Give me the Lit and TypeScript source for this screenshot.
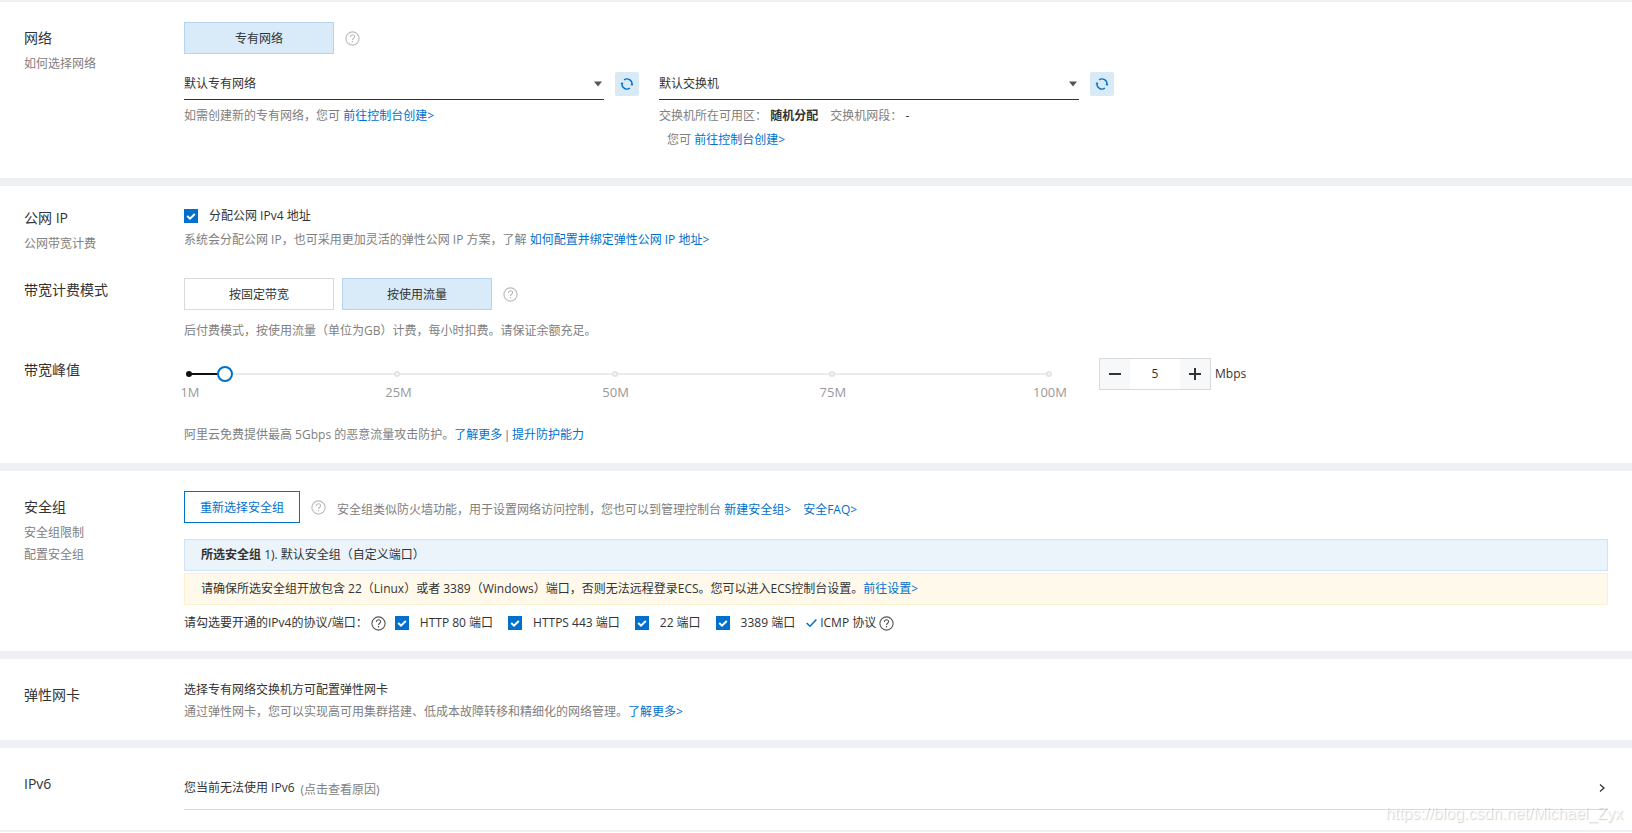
import { LitElement, html, css, svg } from "lit";
import { customElement, property, state } from "lit/decorators.js";
import { styleMap } from "lit/directives/style-map.js";

const shared = css`
  * {
    box-sizing: border-box;
  }
  a {
    color: #0070cc;
    text-decoration: none;
  }
`;

@customElement("help-icon")
class HelpIcon extends LitElement {
  static styles = css`
    :host {
      display: block;
      flex: none;
      width: 15px;
      height: 15px;
      color: #bbb;
    }
    .small {
      width: 14px;
    }
    svg {
      display: block;
    }
  `;
  render() {
    return html`<svg width="15" height="15" viewBox="0 0 15 15" fill="none" stroke="currentColor" role="img" aria-label="帮助">
      <circle cx="7.5" cy="7.5" r="6.600" stroke-width="1.100" />
      <path d="M5.400 6c0-1.300.9-2.200 2.100-2.200s2.100.9 2.100 2c0 1.400-2.100 1.600-2.100 3.200" stroke-width="1.100" />
      <path d="M7.500 10v1.400" stroke-width="1.200" />
    </svg>`;
  }
}

@customElement("check-option")
class CheckOption extends LitElement {
  @property() label = "";
  static styles = [
    shared,
    css`
      :host {
        display: block;
      }
      .option {
        display: flex;
        align-items: center;
        gap: 11px;
        line-height: 20px;
      }
      .box {
        display: grid;
        width: 14px;
        height: 14px;
      }
      input,
      svg {
        grid-area: 1 / 1;
        width: 14px;
        height: 14px;
        margin: 0;
      }
      input {
        appearance: none;
        border: 1px solid #0070cc;
        background: #fff;
      }
      input:checked {
        background: #0070cc;
      }
      svg {
        pointer-events: none;
      }
    `,
  ];
  render() {
    return html`<label class="option">
      <span class="box">
        <input type="checkbox" checked />
        <svg viewBox="0 0 14 14" fill="none" stroke="#fff" stroke-width="2"><path d="M3.200 7l2.800 2.700L10.800 5" /></svg>
      </span>
      <span>${this.label}</span>
    </label>`;
  }
}

@customElement("resource-select")
class ResourceSelect extends LitElement {
  @property() label = "";
  @property() value = "";
  static styles = [
    shared,
    css`
      :host {
        display: block;
        flex: 0 1 455px;
        min-width: 0;
      }
      .line {
        display: flex;
        align-items: center;
        gap: 11px;
      }
      .field {
        display: grid;
        flex: 1;
        align-items: center;
      }
      select {
        grid-area: 1 / 1;
        appearance: none;
        height: 32px;
        padding: 0;
        border: 0;
        border-bottom: 1px solid #333;
        border-radius: 0;
        background: transparent;
        color: #333;
        font: inherit;
      }
      .arrow {
        grid-area: 1 / 1;
        justify-self: end;
        margin-right: 2px;
        pointer-events: none;
      }
      button {
        display: grid;
        place-items: center;
        width: 24px;
        height: 24px;
        padding: 0;
        border: 0;
        border-radius: 2px;
        background: #d9eaf7;
        color: #0070cc;
      }
      .note {
        margin-top: 4px;
        line-height: 24px;
        color: #808080;
      }
    `,
  ];
  render() {
    return html`<div class="line">
        <div class="field">
          <select aria-label=${this.label}>
            <option>${this.value}</option>
          </select>
          <svg class="arrow" width="8" height="6" viewBox="0 0 8 6"><path d="M0 0.500h8L4 5.500z" fill="#555" /></svg>
        </div>
        <button type="button" aria-label="刷新">
          <svg width="14" height="14" viewBox="0 0 14 14" fill="none" stroke="currentColor" stroke-width="1.300">
            <path d="M4.100 2.900A5 5 0 0 1 12 7.500M9.900 11.100A5 5 0 0 1 2 6.500" />
            <path d="M10.500 6.900h3L12 8.900zM.5 7.100h3L2 5.100z" fill="currentColor" stroke="none" />
          </svg>
        </button>
      </div>
      <div class="note"><slot></slot></div>`;
  }
}

@customElement("bandwidth-slider")
class BandwidthSlider extends LitElement {
  @property({ type: Number }) value = 5;
  static styles = [
    shared,
    css`
      :host {
        display: block;
        flex: 0 1 870px;
        min-width: 0;
        padding: 0 4px 0 6px;
      }
      .rail {
        position: relative;
        display: flex;
        align-items: center;
        height: 32px;
      }
      .track {
        flex: 1;
        height: 2px;
        background: #ebebeb;
      }
      .filled {
        height: 2px;
        background: #111;
      }
      .dot {
        position: absolute;
        top: 13px;
        width: 6px;
        height: 6px;
        margin-left: -4px;
        border: 2px solid #e3e3e3;
        border-radius: 50%;
        background: #fff;
      }
      .dot.passed {
        border-color: #111;
        background: #111;
      }
      input {
        position: absolute;
        inset: 0 -8px;
        width: calc(100% + 16px);
        margin: 0;
        appearance: none;
        background: transparent;
      }
      input::-webkit-slider-thumb {
        appearance: none;
        width: 16px;
        height: 16px;
        border: 2px solid #0070cc;
        border-radius: 50%;
        background: #fff;
      }
      .scale {
        position: relative;
        height: 20px;
        margin-top: -8px;
        font-size: 13px;
        line-height: 20px;
        color: #999;
      }
      .mark {
        position: absolute;
        transform: translateX(-50%);
      }
    `,
  ];
  private place(v: number) {
    return `${((v - 1) / 99) * 100}%`;
  }
  render() {
    const marks = [1, 25, 50, 75, 100];
    return html`<div class="rail">
        <div class="track"><div class="filled" style=${styleMap({ width: this.place(this.value) })}></div></div>
        ${marks.map(
          (m) => html`<span class="dot ${m <= this.value ? "passed" : ""}" style=${styleMap({ left: this.place(m) })}></span>`
        )}
        <input
          type="range"
          min="1"
          max="100"
          aria-label="带宽峰值"
          .value=${String(this.value)}
          @input=${(e: Event) =>
            this.dispatchEvent(new CustomEvent("change-value", { detail: Number((e.target as HTMLInputElement).value) }))}
        />
      </div>
      <div class="scale">${marks.map((m) => html`<span class="mark" style=${styleMap({ left: this.place(m) })}>${m}M</span>`)}</div>`;
  }
}

@customElement("app-root")
class AppRoot extends LitElement {
  @state() bandwidth = 5;

  static styles = [
    shared,
    css`
      :host {
        display: block;
        position: relative;
        padding: 2px 0;
        background: #eff0f4;
        color: #333;
        font: 12px/20px "Open Sans", "Noto Sans CJK SC", sans-serif;
      }
      section {
        padding: 20px 24px;
        background: #fff;
      }
      section + section {
        margin-top: 8px;
      }
      .row {
        display: grid;
        grid-template-columns: 160px minmax(0, 1fr);
      }
      .network {
        padding-bottom: 26px;
      }
      .public-ip,
      .security {
        padding-bottom: 18px;
      }
      .interface {
        padding-bottom: 17px;
      }
      .caption {
        padding-top: 4px;
      }
      .public-ip .caption {
        padding-top: 0;
      }
      h2 {
        margin: 0 0 3px;
        font-size: 14px;
        font-weight: 400;
        line-height: 24px;
      }
      .caption a {
        display: block;
        line-height: 22px;
        color: #808080;
      }
      .muted {
        color: #808080;
      }
      .choices {
        display: flex;
        align-items: center;
        gap: 8px;
      }
      .choices help-icon {
        margin-left: 3px;
      }
      .choice {
        width: 150px;
        height: 32px;
        padding: 2px 0 0;
        border: 1px solid #d9d9d9;
        background: #fff;
        color: #333;
        font: inherit;
      }
      .choice.selected {
        border-color: #b2d4ef;
        background: #d9eaf8;
      }
      .choice.outlined {
        width: 116px;
        border-color: #0070cc;
        color: #0070cc;
      }
      .resources {
        display: flex;
        gap: 20px;
        margin-top: 14px;
      }
      .resources b {
        margin-right: 9px;
        color: #333;
      }
      .resources .value {
        color: #333;
      }
      .indent {
        padding-left: 8px;
      }
      .hint {
        margin-top: 4px;
      }
      .billing {
        margin-top: 23px;
      }
      .billing .hint {
        margin-top: 11px;
      }
      .peak {
        margin-top: 17px;
      }
      .peak .hint {
        margin-top: 23px;
      }
      .bar {
        font-family: "Liberation Sans", sans-serif;
      }
      .amount {
        display: flex;
        align-items: flex-start;
        gap: 45px;
      }
      .amount-field {
        display: flex;
        align-items: center;
        gap: 4px;
      }
      .stepper {
        display: flex;
        width: 112px;
        height: 32px;
        border: 1px solid #d9d9d9;
      }
      .stepper button {
        display: grid;
        place-items: center;
        flex: none;
        width: 30px;
        padding: 0;
        border: 0;
        background: #f7f8fa;
        color: #333;
      }
      .stepper input {
        flex: 1;
        min-width: 0;
        padding: 0;
        border: 0;
        color: #333;
        font: inherit;
        text-align: center;
      }
      .group-note {
        padding: 6px 0 0 3px;
      }
      .group-note a + a {
        margin-left: 9px;
      }
      .notice {
        padding: 5px 16px;
        border: 1px solid #cfe3f3;
        background: #ebf3fb;
      }
      .notice.info {
        margin-top: 16px;
      }
      .notice.warning {
        margin-top: 2px;
        border-color: #fdf0cc;
        background: #fff9eb;
      }
      .ports {
        display: flex;
        flex-wrap: wrap;
        align-items: center;
        gap: 0 15px;
        margin-top: 8px;
      }
      .ports .lead,
      .ports .icmp {
        display: flex;
        align-items: center;
        gap: 3px;
      }
      .ports .lead {
        margin-right: -6px;
      }
      .ports .icmp {
        margin-left: -4px;
      }
      .ports help-icon {
        color: #555;
      }
      .lines {
        line-height: 22px;
      }
      .disclosure {
        display: flex;
        align-items: center;
        gap: 6px;
        width: 100%;
        height: 42px;
        padding: 0 0 2px;
        border: 0;
        border-bottom: 1px solid #d9d9d9;
        background: none;
        color: #333;
        font: inherit;
        text-align: left;
      }
      .reason {
        padding-top: 4px;
        color: #808080;
      }
      .disclosure svg {
        margin: 0 3px 0 auto;
      }
      .watermark {
        position: absolute;
        right: 9px;
        bottom: 8px;
        font: 16px/20px "Liberation Sans", sans-serif;
        color: rgba(255, 255, 255, 0.8);
        text-shadow: 1px 1px 1px rgba(0, 0, 0, 0.18);
        pointer-events: none;
      }
    `,
  ];

  private step(by: number) {
    this.bandwidth = Math.min(100, Math.max(1, this.bandwidth + by));
  }

  private renderGlyph(d: string) {
    return html`<svg width="12" height="12" viewBox="0 0 12 12" fill="none" stroke="currentColor" stroke-width="2">
      ${svg`<path d=${d} />`}
    </svg>`;
  }

  render() {
    return html`
      <section class="network">
        <div class="row">
          <div class="caption">
            <h2>网络</h2>
            <a href="#">如何选择网络</a>
          </div>
          <div>
            <div class="choices">
              <button type="button" class="choice selected">专有网络</button>
              <help-icon></help-icon>
            </div>
            <div class="resources">
              <resource-select label="专有网络" value="默认专有网络">
                如需创建新的专有网络，您可 <a href="#">前往控制台创建&gt;</a>
              </resource-select>
              <resource-select label="交换机" value="默认交换机">
                <div>交换机所在可用区： <b>随机分配</b> 交换机网段： <span class="value">-</span></div>
                <div class="indent">您可 <a href="#">前往控制台创建&gt;</a></div>
              </resource-select>
            </div>
          </div>
        </div>
      </section>

      <section class="public-ip">
        <div class="row">
          <div class="caption">
            <h2>公网 IP</h2>
            <a href="#">公网带宽计费</a>
          </div>
          <div>
            <check-option label="分配公网 IPv4 地址"></check-option>
            <div class="hint muted">
              系统会分配公网 IP，也可采用更加灵活的弹性公网 IP 方案，了解
              <a href="#">如何配置并绑定弹性公网 IP 地址&gt;</a>
            </div>
          </div>
        </div>
        <div class="row billing">
          <div class="caption"><h2>带宽计费模式</h2></div>
          <div>
            <div class="choices">
              <button type="button" class="choice">按固定带宽</button>
              <button type="button" class="choice selected">按使用流量</button>
              <help-icon></help-icon>
            </div>
            <div class="hint muted">后付费模式，按使用流量（单位为GB）计费，每小时扣费。请保证余额充足。</div>
          </div>
        </div>
        <div class="row peak">
          <div class="caption"><h2>带宽峰值</h2></div>
          <div>
            <div class="amount">
              <bandwidth-slider
                .value=${this.bandwidth}
                @change-value=${(e: CustomEvent) => (this.bandwidth = e.detail)}
              ></bandwidth-slider>
              <div class="amount-field">
                <div class="stepper">
                  <button type="button" aria-label="减少" @click=${() => this.step(-1)}>${this.renderGlyph("M0 6h12")}</button>
                  <input id="bandwidth" type="text" .value=${String(this.bandwidth)} />
                  <button type="button" aria-label="增加" @click=${() => this.step(1)}>${this.renderGlyph("M0 6h12M6 0v12")}</button>
                </div>
                <label for="bandwidth">Mbps</label>
              </div>
            </div>
            <div class="hint muted">
              阿里云免费提供最高 5Gbps 的恶意流量攻击防护。<a href="#">了解更多</a><span class="bar"> | </span
              ><a href="#">提升防护能力</a>
            </div>
          </div>
        </div>
      </section>

      <section class="security">
        <div class="row">
          <div class="caption">
            <h2>安全组</h2>
            <a href="#">安全组限制</a>
            <a href="#">配置安全组</a>
          </div>
          <div>
            <div class="choices">
              <button type="button" class="choice outlined">重新选择安全组</button>
              <help-icon></help-icon>
              <div class="group-note muted">
                安全组类似防火墙功能，用于设置网络访问控制，您也可以到管理控制台
                <a href="#">新建安全组&gt;</a> <a href="#">安全FAQ&gt;</a>
              </div>
            </div>
            <div class="notice info"><b>所选安全组</b> 1). 默认安全组（自定义端口）</div>
            <div class="notice warning">
              请确保所选安全组开放包含 22（Linux）或者 3389（Windows）端口，否则无法远程登录ECS。您可以进入ECS控制台设置。<a
                href="#"
                >前往设置&gt;</a
              >
            </div>
            <div class="ports">
              <div class="lead"><span>请勾选要开通的IPv4的协议/端口：</span><help-icon></help-icon></div>
              <check-option label="HTTP 80 端口"></check-option>
              <check-option label="HTTPS 443 端口"></check-option>
              <check-option label="22 端口"></check-option>
              <check-option label="3389 端口"></check-option>
              <div class="icmp">
                <svg width="11" height="10" viewBox="0 0 11 10" fill="none" stroke="#0070cc" stroke-width="1.500">
                  <path d="M.6 5l3.400 3.200L10.400 1.400" />
                </svg>
                <span>ICMP 协议</span>
                <help-icon></help-icon>
              </div>
            </div>
          </div>
        </div>
      </section>

      <section class="interface">
        <div class="row">
          <div class="caption"><h2>弹性网卡</h2></div>
          <div class="lines">
            <div>选择专有网络交换机方可配置弹性网卡</div>
            <div class="muted">
              通过弹性网卡，您可以实现高可用集群搭建、低成本故障转移和精细化的网络管理。<a href="#">了解更多&gt;</a>
            </div>
          </div>
        </div>
      </section>

      <section>
        <div class="row">
          <div class="caption"><h2>IPv6</h2></div>
          <button type="button" class="disclosure">
            <span>您当前无法使用 IPv6</span>
            <span class="reason">(点击查看原因)</span>
            <svg width="6" height="8" viewBox="0 0 6 8" fill="none" stroke="#333" stroke-width="1.300">
              <path d="M1 .6L5 4 1 7.400" />
            </svg>
          </button>
        </div>
      </section>
      <div class="watermark">https://blog.csdn.net/Michael_Zyx</div>
    `;
  }
}
